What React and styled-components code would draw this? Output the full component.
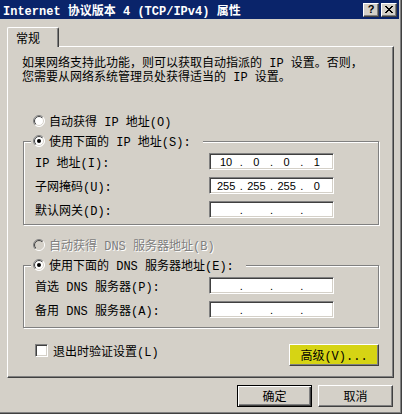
import React from 'react';
import styled, { createGlobalStyle, css } from 'styled-components';

const GlobalStyle = createGlobalStyle`
  html, body {
    margin: 0;
    padding: 0;
    background: #fff;
  }
  body {
    font-family: "Liberation Mono", "Noto Sans CJK SC", monospace;
    font-size: 12px;
    color: #000;
  }
`

const Window = styled.div`
  width: 402px;
  height: 414px;
  box-sizing: border-box;
  background: #d4d0c8;
  box-shadow: inset -1px -1px 0 #404040, inset -2px -2px 0 #808080;
  display: flex;
  flex-direction: column;
`

const TitleBar = styled.div`
  height: 19px;
  margin-right: 3px;
  padding-left: 3px;
  background: #0a246a;
  display: flex;
  align-items: center;
`

const TitleText = styled.span`
  color: #fff;
  font-weight: bold;
  font-size: 12px;
  white-space: nowrap;
`

const CaptionButtons = styled.div`
  margin-left: auto;
  margin-right: 2px;
  display: flex;
  gap: 2px;
`

const CaptionButton = styled.span`
  width: 16px;
  height: 14px;
  box-sizing: border-box;
  background: #d4d0c8;
  border: 1px solid;
  border-color: #fff #404040 #404040 #fff;
  box-shadow: inset -1px -1px 0 #808080;
  display: flex;
  align-items: center;
  justify-content: center;
  font: bold 11px "Liberation Sans", sans-serif;
  line-height: 1;
`

const TabStrip = styled.div`
  margin-top: 8px;
  padding-left: 7px;
  display: flex;
`

const Tab = styled.div`
  position: relative;
  z-index: 1;
  width: 52px;
  height: 20px;
  margin-bottom: -1px;
  box-sizing: border-box;
  padding-left: 8px;
  background: #d4d0c8;
  border-top: 1px solid #fff;
  border-left: 1px solid #fff;
  border-right: 1px solid #404040;
  box-shadow: inset -1px 0 0 #808080;
  border-radius: 2px 2px 0 0;
  display: flex;
  align-items: center;
`

const Panel = styled.div`
  margin-left: 7px;
  width: 387px;
  height: 332px;
  box-sizing: border-box;
  padding: 0 14px 0 15px;
  border: 1px solid;
  border-color: #fff #404040 #404040 #fff;
  box-shadow: inset -1px -1px 0 #808080;
  display: flex;
  flex-direction: column;
`

const Intro = styled.p`
  margin: 10px 0 0 -1px;
  line-height: 14px;
  white-space: nowrap;
`

const Choice = styled.div`
  height: 14px;
  margin: ${p => p.$top}px 0 0 10px;
  display: flex;
  align-items: center;
  gap: 4px;
  white-space: nowrap;
  color: ${p => (p.$disabled ? '#808080' : '#000')};
  text-shadow: ${p => (p.$disabled ? '1px 1px 0 #fff' : 'none')};
`

const Group = styled.fieldset`
  margin: 6px 0 0;
  padding: 5px 44px ${p => p.$bottom}px 7px;
  min-width: 0;
  border: 1px solid #808080;
  box-shadow: inset 1px 1px 0 #fff, 1px 1px 0 #fff;
  display: flex;
  flex-direction: column;
  gap: 7px;
`

const Legend = styled.legend`
  height: 14px;
  padding: 0 12px 0 2px;
  background: #d4d0c8;
  display: flex;
  align-items: center;
  gap: 4px;
  white-space: nowrap;
`

const Field = styled.div`
  height: 17px;
  margin-left: 4px;
  display: flex;
  align-items: center;
`

const FieldLabel = styled.span`
  flex: 1;
  white-space: nowrap;
`

const IpBox = styled.div`
  width: 125px;
  height: 17px;
  box-sizing: border-box;
  padding: 0 3px;
  background: #fff;
  border: 1px solid;
  border-color: #808080 #fff #fff #808080;
  box-shadow: inset 1px 1px 0 #404040, inset -1px -1px 0 #d4d0c8;
  display: flex;
  align-items: center;
  font: 11px "Liberation Sans", sans-serif;
`

const Octet = styled.span`
  flex: 1;
  text-align: center;
`

const Dot = styled.span`
  width: 4px;
  text-align: center;
`

const BottomRow = styled.div`
  margin-top: 16px;
  display: flex;
  justify-content: space-between;
  align-items: flex-start;
`

const CheckLabel = styled.label`
  margin-left: 12px;
  height: 13px;
  display: flex;
  align-items: center;
  gap: 5px;
  white-space: nowrap;
`

const CheckBox = styled.span`
  width: 13px;
  height: 13px;
  box-sizing: border-box;
  background: #fff;
  border: 1px solid;
  border-color: #808080 #fff #fff #808080;
  box-shadow: inset 1px 1px 0 #404040, inset -1px -1px 0 #d4d0c8;
`

const Button = styled.button`
  width: ${p => p.$w}px;
  height: 22px;
  box-sizing: border-box;
  padding: 0;
  font: 12px "Liberation Mono", "Noto Sans CJK SC", monospace;
  color: #000;
  background: ${p => p.$bg || '#d4d0c8'};
  border: 1px solid;
  border-color: #fff #404040 #404040 #fff;
  box-shadow: inset -1px -1px 0 #808080;
  ${p => p.$default && css`
    border-color: #000;
    box-shadow: inset 1px 1px 0 #fff, inset -1px -1px 0 #404040, inset -2px -2px 0 #808080;
  `}
`

const Actions = styled.div`
  margin: 7px 9px 0 0;
  display: flex;
  justify-content: flex-end;
  gap: 6px;
`

const Radio = ({ checked, disabled }) => (
  <svg width="12" height="12" viewBox="0 0 12 12" style={{ flex: 'none' }}>
    <defs>
      <linearGradient id="radioOuter" x1="0" y1="0" x2="1" y2="1">
        <stop offset="0.5" stopColor="#808080" />
        <stop offset="0.5" stopColor="#fff" />
      </linearGradient>
      <linearGradient id="radioInner" x1="0" y1="0" x2="1" y2="1">
        <stop offset="0.5" stopColor="#404040" />
        <stop offset="0.5" stopColor="#d4d0c8" />
      </linearGradient>
    </defs>
    <circle cx="6" cy="6" r="5.5" fill={disabled ? '#d4d0c8' : '#fff'} stroke="url(#radioOuter)" />
    <circle cx="6" cy="6" r="4.5" fill="none" stroke="url(#radioInner)" />
    {checked && <circle cx="6" cy="6" r="2" fill="#000" />}
  </svg>
)

const closeRows = ['11000011', '01100110', '00111100', '00011000', '00111100', '01100110', '11000011']

const CloseGlyph = () => (
  <svg width="8" height="7" viewBox="0 0 8 7" shapeRendering="crispEdges">
    {closeRows.map((row, y) =>
      row.split('').map((c, x) => (c === '1' ? <rect key={`${x}-${y}`} x={x} y={y} width="1" height="1" fill="#000" /> : null))
    )}
  </svg>
)

const IpInput = ({ parts }) => (
  <IpBox>
    <Octet>{parts[0]}</Octet><Dot>.</Dot>
    <Octet>{parts[1]}</Octet><Dot>.</Dot>
    <Octet>{parts[2]}</Octet><Dot>.</Dot>
    <Octet>{parts[3]}</Octet>
  </IpBox>
)

const empty = ['', '', '', '']

const App = () => {
  return (
    <>
      <GlobalStyle />
      <Window>
        <TitleBar>
          <TitleText>Internet 协议版本 4 (TCP/IPv4) 属性</TitleText>
          <CaptionButtons>
            <CaptionButton>?</CaptionButton>
            <CaptionButton><CloseGlyph /></CaptionButton>
          </CaptionButtons>
        </TitleBar>
        <TabStrip>
          <Tab>常规</Tab>
        </TabStrip>
        <Panel>
          <Intro>
            如果网络支持此功能，则可以获取自动指派的 IP 设置。否则，<br />
            您需要从网络系统管理员处获得适当的 IP 设置。
          </Intro>
          <Choice $top={29}>
            <Radio />
            <span>自动获得 IP 地址(O)</span>
          </Choice>
          <Group $bottom={6}>
            <Legend>
              <Radio checked />
              <span>使用下面的 IP 地址(S):</span>
            </Legend>
            <Field>
              <FieldLabel>IP 地址(I):</FieldLabel>
              <IpInput parts={['10', '0', '0', '1']} />
            </Field>
            <Field>
              <FieldLabel>子网掩码(U):</FieldLabel>
              <IpInput parts={['255', '255', '255', '0']} />
            </Field>
            <Field>
              <FieldLabel>默认网关(D):</FieldLabel>
              <IpInput parts={empty} />
            </Field>
          </Group>
          <Choice $top={13} $disabled>
            <Radio disabled />
            <span>自动获得 DNS 服务器地址(B)</span>
          </Choice>
          <Group $bottom={9}>
            <Legend>
              <Radio checked />
              <span>使用下面的 DNS 服务器地址(E):</span>
            </Legend>
            <Field>
              <FieldLabel>首选 DNS 服务器(P):</FieldLabel>
              <IpInput parts={empty} />
            </Field>
            <Field>
              <FieldLabel>备用 DNS 服务器(A):</FieldLabel>
              <IpInput parts={empty} />
            </Field>
          </Group>
          <BottomRow>
            <CheckLabel>
              <CheckBox />
              <span>退出时验证设置(L)</span>
            </CheckLabel>
            <Button $w={90} $bg="#d6d414">高级(V)...</Button>
          </BottomRow>
        </Panel>
        <Actions>
          <Button $w={75} $default>确定</Button>
          <Button $w={75}>取消</Button>
        </Actions>
      </Window>
    </>
  )
}

export default App;
